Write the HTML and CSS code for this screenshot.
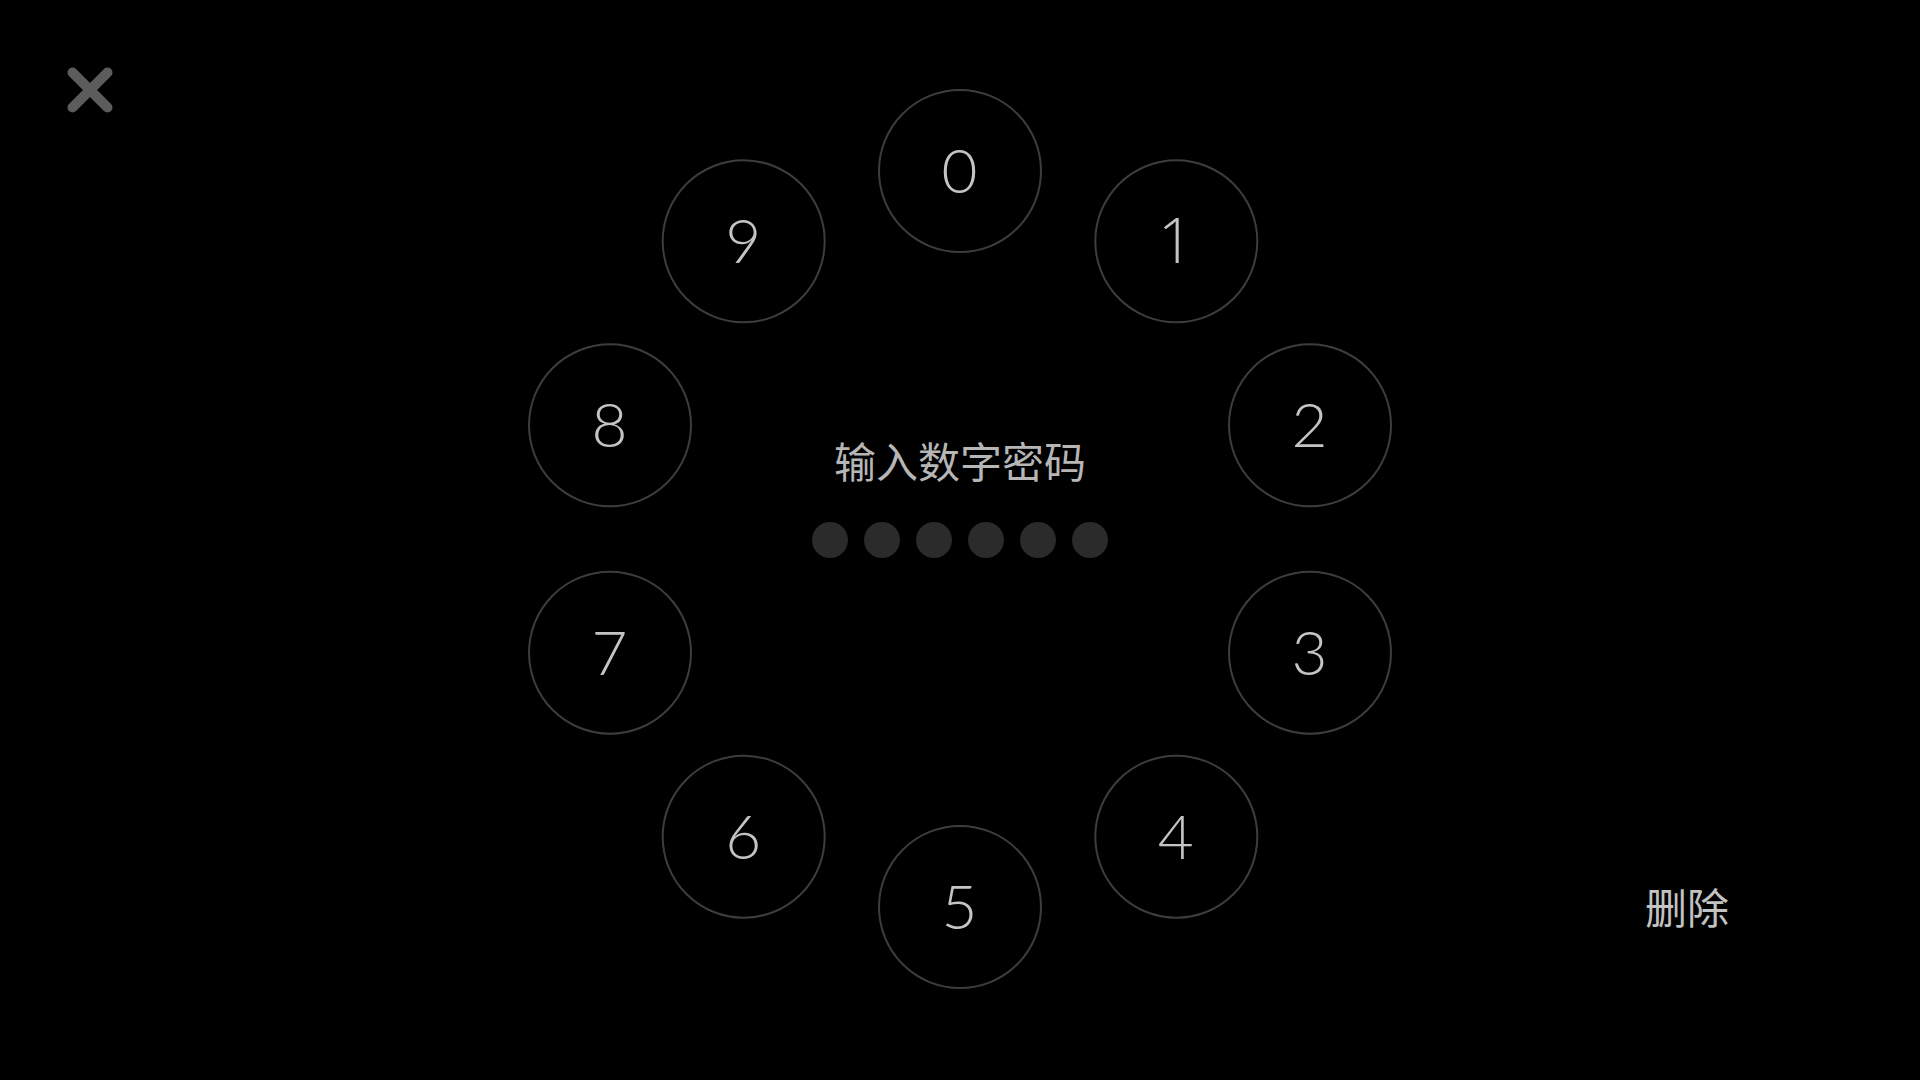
FILE: index.html
```html
<!DOCTYPE html>
<html lang="zh-CN">
<head>
<meta charset="utf-8">
<title>输入数字密码</title>
<link rel="stylesheet" href="styles.css">
</head>
<body>
<div class="page">
  <button class="close" aria-label="关闭">
    <svg width="60" height="60" viewBox="0 0 60 60"><path d="M12.5 12.5 L47.5 47.5 M47.5 12.5 L12.5 47.5" stroke="#5c5c5c" stroke-width="10" stroke-linecap="round" fill="none"/></svg>
  </button>

  <div class="prompt">
    <div class="title">输入数字密码</div>
    <div class="dots">
      <span class="dot"></span><span class="dot"></span><span class="dot"></span><span class="dot"></span><span class="dot"></span><span class="dot"></span>
    </div>
  </div>

  <div class="dial">
    <button class="key k0">0</button>
    <button class="key k1">1</button>
    <button class="key k2">2</button>
    <button class="key k3">3</button>
    <button class="key k4">4</button>
    <button class="key k5">5</button>
    <button class="key k6">6</button>
    <button class="key k7">7</button>
    <button class="key k8">8</button>
    <button class="key k9">9</button>
  </div>

  <button class="delete">删除</button>
</div>
</body>
</html>
```
FILE: styles.css
```css
html, body {
  margin: 0;
  padding: 0;
  background: #000;
}
.page {
  position: relative;
  width: 1920px;
  height: 1080px;
  overflow: hidden;
  background: #000;
  display: flex;
  flex-direction: column;
  align-items: center;
  box-sizing: border-box;
  padding-top: 439px;
  font-family: "Noto Sans CJK SC", "Noto Sans", sans-serif;
}
button {
  background: none;
  border: 0;
  padding: 0;
  margin: 0;
  cursor: pointer;
  font: inherit;
}
.close {
  position: absolute;
  left: 60px;
  top: 60px;
  width: 60px;
  height: 60px;
  display: block;
}
.close svg {
  display: block;
}
.prompt {
  display: flex;
  flex-direction: column;
  align-items: center;
}
.title {
  font-size: 42px;
  line-height: 42px;
  color: #b6b6b6;
  letter-spacing: 0;
  white-space: nowrap;
}
.dots {
  display: flex;
  gap: 16px;
  margin-top: 41px;
}
.dot {
  width: 36px;
  height: 36px;
  border-radius: 50%;
  background: #2b2b2b;
}
.dial {
  position: absolute;
  left: 959.5px;
  top: 539px;
  width: 0;
  height: 0;
}
.key {
  position: absolute;
  left: -82px;
  top: -82px;
  width: 164px;
  height: 164px;
  box-sizing: border-box;
  border: 2px solid #3d3d3d;
  border-radius: 50%;
  display: flex;
  align-items: center;
  justify-content: center;
  font-family: Lato, "Open Sans", sans-serif;
  font-weight: 300;
  font-size: 62px;
  line-height: 1;
  color: #c4c4c4;
  padding-bottom: 4px;
  transform: rotate(var(--a)) translateY(-368px) rotate(calc(-1 * var(--a)));
}
.k0 { --a: 0deg; }
.k1 { --a: 36deg; font-family: "Open Sans", Lato, sans-serif; }
.k2 { --a: 72deg; }
.k3 { --a: 108deg; }
.k4 { --a: 144deg; }
.k5 { --a: 180deg; }
.k6 { --a: 216deg; }
.k7 { --a: 252deg; }
.k8 { --a: 288deg; }
.k9 { --a: 324deg; }
.delete {
  position: absolute;
  left: 1645px;
  top: 885px;
  font-size: 42px;
  line-height: 42px;
  color: #c2c2c2;
  white-space: nowrap;
}
```
